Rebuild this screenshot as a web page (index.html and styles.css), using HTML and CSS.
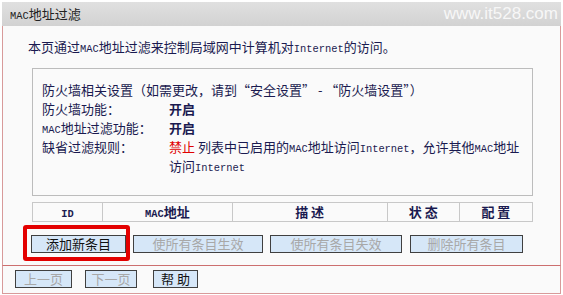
FILE: index.html
```html
<!DOCTYPE html>
<html lang="zh-CN">
<head>
    <meta charset="UTF-8">
    <meta name="viewport" content="width=device-width, initial-scale=1.0">
    <title>MAC地址过滤</title>
    <link rel="stylesheet" href="styles.css">
</head>
<body>
    <div class="frame">
        <div class="title-bar">
            <span class="title"><span class="en">MAC</span>地址过滤</span>
            <span class="mark">www.it528.com</span>
        </div>

        <div class="panel">
            <p class="intro">本页通过<span class="en">MAC</span>地址过滤来控制局域网中计算机对<span class="en">Internet</span>的访问。</p>

            <div class="info-box">
                <div class="info-head">防火墙相关设置（如需更改，请到“安全设置” - “防火墙设置”）</div>
                <div class="info-row">
                    <span class="label">防火墙功能：</span>
                    <span class="value strong">开启</span>
                </div>
                <div class="info-row">
                    <span class="label"><span class="en">MAC</span>地址过滤功能：</span>
                    <span class="value strong">开启</span>
                </div>
                <div class="info-row">
                    <span class="label">缺省过滤规则：</span>
                    <span class="value"><span class="deny">禁止</span> 列表中已启用的<span class="en">MAC</span>地址访问<span class="en">Internet</span>，允许其他<span class="en">MAC</span>地址<br>访问<span class="en">Internet</span></span>
                </div>
            </div>

            <table class="rules">
                <tr>
                    <th class="col-id"><span class="en">ID</span></th>
                    <th class="col-mac"><span class="en">MAC</span>地址</th>
                    <th class="col-desc">描 述</th>
                    <th class="col-state">状 态</th>
                    <th class="col-conf">配 置</th>
                </tr>
            </table>

            <div class="actions">
                <span class="highlight"><button type="button" class="btn btn-add">添加新条目</button></span>
                <button type="button" class="btn btn-on" disabled>使所有条目生效</button>
                <button type="button" class="btn btn-off" disabled>使所有条目失效</button>
                <button type="button" class="btn btn-del" disabled>删除所有条目</button>
            </div>
        </div>

        <div class="footer">
            <button type="button" class="btn btn-prev" disabled>上一页</button>
            <button type="button" class="btn btn-next" disabled>下一页</button>
            <button type="button" class="btn btn-help">帮 助</button>
        </div>
    </div>
</body>
</html>
```

FILE: styles.css
```css
/* page frame */
body {
    margin: 0;
    background: #fff;
    font: 13px "Noto Sans CJK SC", sans-serif;
    color: #1a1a50;
}
.frame {
    width: 559px;
    margin: 2px 0 0 2px;
}
.en {
    font-family: "Liberation Mono", monospace;
    font-size: 0.8em;
    line-height: 1;
}

/* title bar */
.title-bar {
    height: 24px;
    display: flex;
    justify-content: space-between;
    align-items: center;
    padding: 0 3px 0 8px;
    background: linear-gradient(#e0e0e0, #d2d2d2);
}
.title {
    color: #222;
    line-height: 18px;
}
.mark {
    font: 17px "Liberation Sans", sans-serif;
    color: #f7f7f7;
}

/* main panel */
.panel {
    border-left: 1px solid #d89a9a;
    border-right: 1px solid #d89a9a;
    background: #fafafa;
    padding: 11px 0 12px 0;
}
.intro {
    height: 20px;
    margin: 0 0 0 25px;
    line-height: 20px;
}
.info-box {
    box-sizing: border-box;
    width: 501px;
    height: 128px;
    margin: 11px 0 0 29px;
    padding: 11px 9px 0;
    border: 1px solid #bcbcbc;
    line-height: 19px;
}
.info-head,
.label,
.value {
    line-height: 19px;
    white-space: nowrap;
}
.info-row {
    display: grid;
    grid-template-columns: 127px 1fr;
}
.strong {
    font-weight: bold;
}
.deny {
    color: #e00000;
}

/* rules table */
.rules {
    width: 501px;
    height: 20px;
    margin: 6px 0 0 29px;
    border-collapse: collapse;
}
.rules th {
    height: 18px;
    padding: 0;
    border: 1px solid #c8c8c8;
    font-size: 13px;
    line-height: 18px;
    text-align: center;
    color: #1a1a50;
}
.col-id { width: 70px; }
.col-mac { width: 130px; }
.col-desc { width: 156px; }
.col-state { width: 72px; }
.col-conf { width: 73px; }

/* buttons */
.btn {
    box-sizing: border-box;
    height: 18px;
    padding: 0;
    border: 1px solid #404040;
    background: #d6e7f8;
    font: 13px "Noto Sans CJK SC", sans-serif;
    line-height: 16px;
    color: #111;
}
.btn:disabled {
    color: #a8a8a8;
}
.actions {
    display: flex;
    height: 18px;
    gap: 7px;
    margin: 13px 0 0 28px;
}
.highlight {
    position: relative;
    display: inline-flex;
}
.highlight::after {
    content: "";
    position: absolute;
    left: -8px;
    right: -4px;
    top: -10px;
    bottom: -8px;
    border: 4px solid #e30000;
    border-radius: 3px;
}
.btn-add { width: 95px; }
.btn-on { width: 130px; }
.btn-off { width: 132px; }
.btn-del { width: 113px; margin-left: 1px; }

/* footer */
.footer {
    display: flex;
    height: 18px;
    border: 1px solid #d89a9a;
    border-top-color: #cc6f6f;
    background: #fafafa;
    padding: 4px 0 5px 12px;
}
.btn-prev { width: 57px; }
.btn-next { width: 52px; margin-left: 13px; }
.btn-help { width: 45px; margin-left: 16px; }
```
